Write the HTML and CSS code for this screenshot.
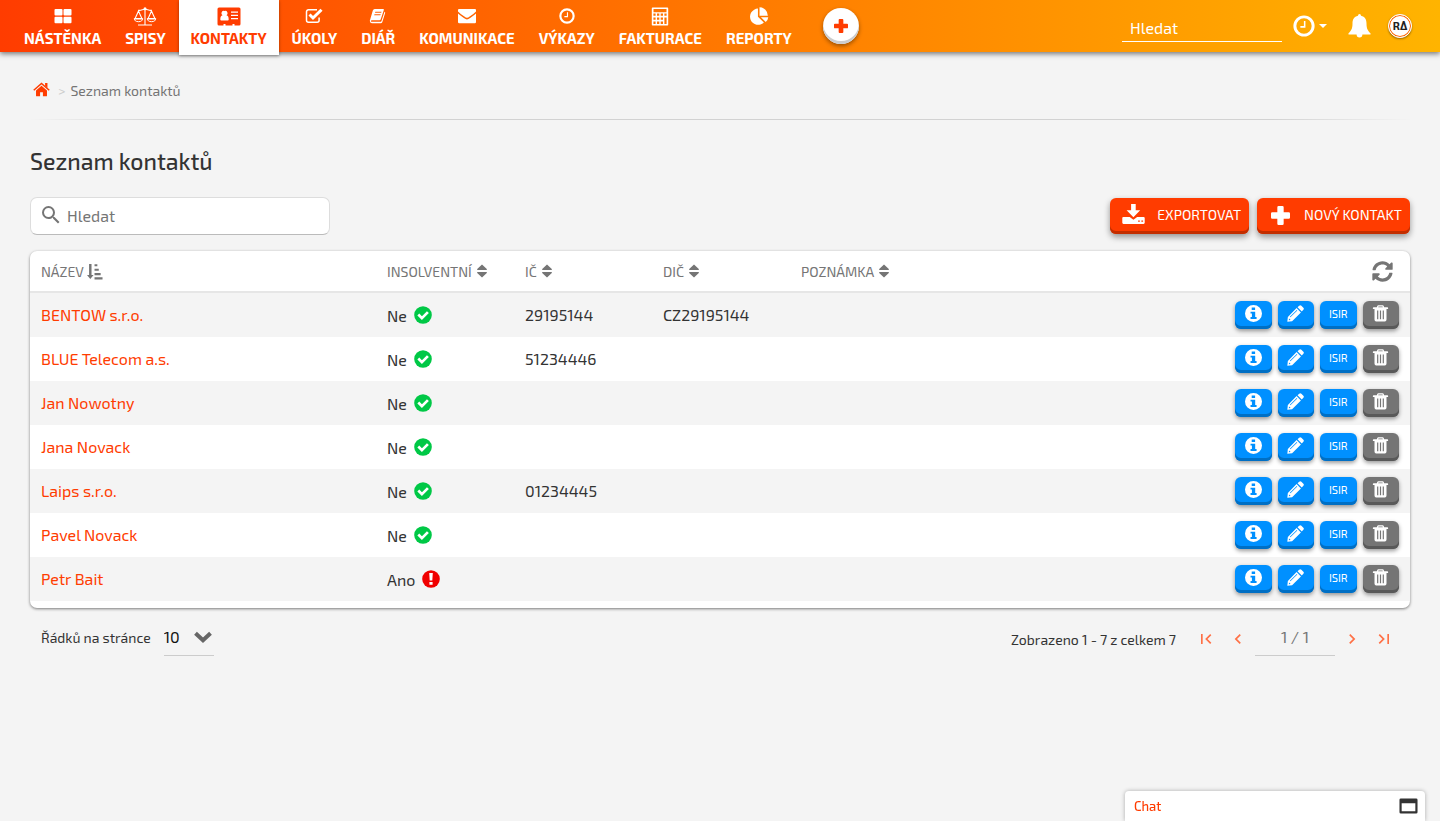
FILE: index.html
```html
<!DOCTYPE html>
<html lang="cs">
<head>
<meta charset="utf-8">
<meta name="viewport" content="width=device-width, initial-scale=1">
<title>Seznam kontaktů</title>
<link rel="stylesheet" href="styles.css">
</head>
<body>
<svg class="sprite" aria-hidden="true">
  <symbol id="i-grid" viewBox="0 0 18 16"><rect x="0.500" y="1" width="8" height="6.500" rx="1"/><rect x="9.500" y="1" width="8" height="6.500" rx="1"/><rect x="0.500" y="8.800" width="8" height="6.500" rx="1"/><rect x="9.500" y="8.800" width="8" height="6.500" rx="1"/></symbol>
  <symbol id="i-scale" viewBox="0 0 22 19"><g fill="none" stroke="currentColor" stroke-width="1.1"><path d="M11 2v15.400M4 18h14M4 3.200c3 .8 4.500-1 7-1s4 1.800 7 1M4.500 4L.9 12h7.200zM17.500 4l-3.600 8h7.200z"/></g><path d="M.3 11.500h8.400c0 2-1.500 3.200-4.200 3.200S.3 13.500.3 11.500zm13 0h8.400c0 2-1.500 3.200-4.200 3.200s-4.200-1.200-4.200-3.200z" fill="none" stroke="currentColor"/><circle cx="11" cy="1.800" r="1.500"/></symbol>
  <symbol id="i-card" viewBox="0 0 24 18"><path fill-rule="evenodd" d="M2 0h20a1.500 1.500 0 0 1 1.500 1.500v15A1.500 1.500 0 0 1 22 18h-4.500v-1.500h-2V18h-7v-1.500h-2V18H2a1.500 1.500 0 0 1-1.500-1.500v-15A1.500 1.500 0 0 1 2 0zm5.500 3.500a2.400 2.400 0 0 0-2 4.300C4 8.300 3.300 9.500 3.300 12q0 1 1 1h6.400q1 0 1-1c0-2.500-.7-3.700-2.200-4.200a2.400 2.400 0 0 0-2-4.300zM14 4v1.300h7V4zm0 3.200v1.300h7V7.200zm0 3.200v1.300h7v-1.300z"/></symbol>
  <symbol id="i-check" viewBox="0 0 18 16"><path fill="none" stroke="currentColor" stroke-width="1.500" d="M12 1.800H3.500a2 2 0 0 0-2 2v8.400a2 2 0 0 0 2 2h8.600a2 2 0 0 0 2-2V9.500"/><path fill="none" stroke="currentColor" stroke-width="3" d="M4.500 6.500l3.500 3.500 8.500-8.300"/></symbol>
  <symbol id="i-book" viewBox="0 0 18 17"><path fill-rule="evenodd" d="M5.500 1h9q1 0 .7 1l-3.300 10q-.3 1-1.300 1H2.400q-.8 0-1 .8.200.9 1.200.9h8.800q1 0 1.300-1l3.200-9.600q1 .2.700 1.200l-3 9.500q-.4 1.500-1.800 1.500H2.500Q.2 15.800.3 13.500L3.500 2.700Q4 1 5.500 1zm.7 3l-.4 1.100h6.600l.4-1.100zm-.9 2.700l-.4 1.100h6.600l.4-1.100z"/></symbol>
  <symbol id="i-mail" viewBox="0 0 20 16"><path d="M2 1h16q1 0 1 1v1.500q-1.500 1.800-6 4.700-2 1.500-3 1.500t-3-1.500Q2.500 5.300 1 3.500V2q0-1 1-1zM1 5.500q1.500 1.500 5.500 4.300Q8.800 11.400 10 11.400t3.500-1.600Q17.500 7 19 5.500V14q0 1.200-1.200 1.200H2.200Q1 15.200 1 14z"/></symbol>
  <symbol id="i-clock" viewBox="0 0 20 20"><circle cx="10" cy="10" r="8.300" fill="none" stroke="currentColor" stroke-width="2.700"/><path d="M10.600 5.400v5.400H6.700" fill="none" stroke="currentColor" stroke-width="1.400"/></symbol>
  <symbol id="i-calc" viewBox="0 0 17 19"><path fill-rule="evenodd" d="M1 .5h15q.7 0 .7.700v16.600q0 .7-.7.700H1q-.7 0-.7-.7V1.200Q.300.500 1 .5zM2 1.900v3.300h13V1.900zM1.900 6.600v2.200h2.200V6.600zm3.600 0v2.200h2.300V6.600zm3.700 0v2.200h2.300V6.600zm3.700 0v2.200h2.200V6.600zM1.900 10.500v2.200h2.200v-2.200zm3.600 0v2.200h2.300v-2.200zm3.700 0v2.200h2.300v-2.200zm3.700 0v6.400h2.200v-6.400zM1.900 14.500v2.400h2.200v-2.400zm3.600 0v2.400h2.300v-2.400zm3.700 0v2.400h2.300v-2.400z"/></symbol>
  <symbol id="i-pie" viewBox="0 0 18 18"><path d="M8 1.500V9.200l5.600 5.500A7.700 7.700 0 1 1 8 1.500zM9.500.3a8 8 0 0 1 7.900 7.900H9.500zM10.800 9.700h7a7.400 7.400 0 0 1-2.400 4.600z"/></symbol>
  <symbol id="i-plus" viewBox="0 0 18 18"><path d="M7.200 0h3.600q1.200 0 1.200 1.200V6h4.800Q18 6 18 7.200v3.600q0 1.200-1.200 1.200H12v4.800q0 1.200-1.200 1.200H7.200Q6 18 6 16.800V12H1.200Q0 12 0 10.800V7.200Q0 6 1.200 6H6V1.200Q6 0 7.200 0z"/></symbol>
  <symbol id="i-bell" viewBox="0 0 22 24"><path d="M11 0q1.500 0 1.500 1.800C16.500 2.600 18 5.500 18 9.500c0 5.500 1.500 7.500 4 9.700v1.300h-8.100a2.900 2.900 0 0 1-5.800 0H0v-1.300c2.500-2.200 4-4.200 4-9.700 0-4 1.500-6.900 5.500-7.700Q9.500 0 11 0z"/></symbol>
  <symbol id="i-home" viewBox="0 0 18 15"><path d="M9 3.500l5.800 5V14q0 .6-.6.600h-3.700v-4.300h-3v4.300H3.800q-.6 0-.6-.6V8.500z"/><path d="M.8 8.300L9 1.200l8.200 7.100" fill="none" stroke="currentColor" stroke-width="1.600"/><path d="M12.800.600h2.500v5.200l-2.500-2.200z"/></symbol>
  <symbol id="i-search" viewBox="3 3 18 18"><path d="M15.500 14h-.79l-.28-.27A6.471 6.471 0 0 0 16 9.500 6.500 6.500 0 1 0 9.500 16c1.610 0 3.090-.59 4.230-1.570l.27.280v.79l5 4.990L20.490 19l-4.990-5zm-6 0C7.010 14 5 11.990 5 9.500S7.010 5 9.500 5 14 7.010 14 9.500 11.990 14 9.500 14z"/></symbol>
  <symbol id="i-download" viewBox="0 0 24 22"><path d="M9.500.5h4.800V7H19l-7.100 7.300L4.800 7h4.700z"/><path fill-rule="evenodd" d="M1.500 14H8l3.900 3 3.900-3h6.700q1.200 0 1.200 1.200v5q0 1.200-1.200 1.200h-21Q.3 21.400.3 20.200v-5Q.3 14 1.500 14zm15.300 3.800V19h1.800v-1.200zm3.400 0V19H22v-1.200z"/></symbol>
  <symbol id="i-asc" viewBox="0 0 17 17"><path d="M2.200.5h2.600v11.800H7l-3.500 4.200L0 12.300h2.200zM8 .8h3v2.200H8zm0 4.800h4.500v2.200H8zm0 4.600h6.500v2.300H8zm0 4.500h8.500v2.200H8z"/></symbol>
  <symbol id="i-sort" viewBox="0 0 10 14"><path d="M5 .5l4.800 4.600v1H.2v-1zM.2 8h9.600v1L5 13.500.2 9z"/></symbol>
  <symbol id="i-sync" viewBox="0 0 512 512"><path d="M370.720 133.280C339.458 104.008 298.888 87.962 255.848 88c-77.458.068-144.328 53.178-162.791 126.850-1.344 5.363-6.122 9.150-11.651 9.150H24.103c-7.498 0-13.194-6.807-11.807-14.176C33.933 94.924 134.813 8 256 8c66.448 0 126.791 26.136 171.315 68.685L463.030 40.970C478.149 25.851 504 36.559 504 57.941V192c0 13.255-10.745 24-24 24H345.941c-21.382 0-32.090-25.851-16.971-40.971zM32 296h134.059c21.382 0 32.090 25.851 16.971 40.971l-41.750 41.750c31.262 29.273 71.835 45.319 114.876 45.280 77.418-.070 144.315-53.144 162.787-126.849 1.344-5.363 6.122-9.150 11.651-9.150h57.304c7.498 0 13.194 6.807 11.807 14.176C478.067 417.076 377.187 504 256 504c-66.448 0-126.791-26.136-171.315-68.685L48.970 471.030C33.851 486.149 8 475.441 8 454.059V320c0-13.255 10.745-24 24-24z"/></symbol>
  <symbol id="i-ok" viewBox="0 0 18 18"><circle cx="9" cy="9" r="8.800"/><path d="M4.300 8.500l3.600 3.600 6-6" fill="none" stroke="#fff" stroke-width="2.700"/></symbol>
  <symbol id="i-alert" viewBox="0 0 18 18"><circle cx="9" cy="9" r="8.800"/><path d="M7.200 3h3.600l-.5 7.500H7.700zM7.400 12h3.200v2.800H7.400z" fill="#fff"/></symbol>
  <symbol id="i-info" viewBox="0 0 16 16"><path fill-rule="evenodd" d="M8 0a8 8 0 1 1 0 16A8 8 0 0 1 8 0zM6.300 2.400v2.300h3.200V2.400zM5.200 6.300v1.700h1.300v3.400H5.200v1.800h5.700v-1.800H9.600V6.300z"/></symbol>
  <symbol id="i-edit" viewBox="0 0 16 16"><path fill-rule="evenodd" d="M11.500.7q1-1 2 0l1.900 1.900q.9 1 0 1.900l-1.500 1.500-4-4zM9 2.900l4.100 4.100-8.300 8.200-4.500.5.500-4.500zM9.200 4.600l-6.500 6.500.5.500 6.500-6.500zM2 12.600l-.3 1.700 1.700-.3z"/></symbol>
  <symbol id="i-trash" viewBox="0 0 16 17"><path fill-rule="evenodd" d="M5.800.3h4.400q.8 0 1 .7l.5 1.300h3.200q.7 0 .7.800v.8H14v10.600q0 2-1.700 2H3.700q-1.700 0-1.700-2V3.900H.4v-.8q0-.8.700-.8h3.200L4.800 1q.2-.7 1-.7zm.2 1.200l-.3.800h4.600l-.3-.8zM4.600 5.500v8.700h1.200V5.500zm2.800 0v8.700h1.200V5.500zm2.800 0v8.700h1.200V5.500z"/></symbol>
  <symbol id="i-down" viewBox="0 0 18 12"><path d="M1.500 2.200L9 9.200l7.500-7" fill="none" stroke="currentColor" stroke-width="4"/></symbol>
  <symbol id="i-first" viewBox="0 0 24 24"><path d="M18.410 16.590L13.820 12l4.590-4.590L17 6l-6 6 6 6zM6 6h2v12H6z"/></symbol>
  <symbol id="i-prev" viewBox="0 0 24 24"><path d="M15.410 7.410L14 6l-6 6 6 6 1.410-1.410L10.830 12z"/></symbol>
  <symbol id="i-next" viewBox="0 0 24 24"><path d="M10 6L8.590 7.410 13.170 12l-4.580 4.590L10 18l6-6z"/></symbol>
  <symbol id="i-last" viewBox="0 0 24 24"><path d="M5.590 7.410L10.180 12l-4.590 4.590L7 18l6-6-6-6zM16 6h2v12h-2z"/></symbol>
  <symbol id="i-window" viewBox="0 0 20 16"><path fill-rule="evenodd" d="M2 0h16q1.500 0 1.500 1.500v13Q19.500 16 18 16H2Q.5 16 .5 14.500v-13Q.5 0 2 0zm.8 5v8.500h14.400V5z"/></symbol>
</svg>

<header class="topbar">
  <nav class="menu" aria-label="Hlavní menu">
    <a class="tab" href="#"><svg class="tab-icon"><use href="#i-grid"/></svg>NÁSTĚNKA</a>
    <a class="tab" href="#"><svg class="tab-icon tab-icon-lg"><use href="#i-scale"/></svg>SPISY</a>
    <a class="tab tab-active" href="#" aria-current="page"><svg class="tab-icon tab-icon-lg"><use href="#i-card"/></svg>KONTAKTY</a>
    <a class="tab" href="#"><svg class="tab-icon"><use href="#i-check"/></svg>ÚKOLY</a>
    <a class="tab" href="#"><svg class="tab-icon"><use href="#i-book"/></svg>DIÁŘ</a>
    <a class="tab" href="#"><svg class="tab-icon"><use href="#i-mail"/></svg>KOMUNIKACE</a>
    <a class="tab" href="#"><svg class="tab-icon"><use href="#i-clock"/></svg>VÝKAZY</a>
    <a class="tab" href="#"><svg class="tab-icon tab-icon-lg"><use href="#i-calc"/></svg>FAKTURACE</a>
    <a class="tab" href="#"><svg class="tab-icon tab-icon-lg"><use href="#i-pie"/></svg>REPORTY</a>
  </nav>
  <button class="add" type="button" aria-label="Přidat"><svg><use href="#i-plus"/></svg></button>
  <div class="tools">
    <input class="top-search" type="search" placeholder="Hledat" aria-label="Hledat v aplikaci">
    <button class="tool timer" type="button" aria-label="Měření času"><svg><use href="#i-clock"/></svg><span class="caret"></span></button>
    <button class="tool bell" type="button" aria-label="Oznámení"><svg><use href="#i-bell"/></svg></button>
    <button class="avatar" type="button" aria-label="Uživatel">RΔ</button>
  </div>
</header>

<main class="page">
  <nav class="crumbs" aria-label="Drobečková navigace">
    <a class="home" href="#" aria-label="Domů"><svg><use href="#i-home"/></svg></a>
    <span class="crumb-sep">&gt;</span>
    <span>Seznam kontaktů</span>
  </nav>
  <h1 class="title">Seznam kontaktů</h1>
  <div class="toolbar">
    <label class="search"><svg><use href="#i-search"/></svg><input type="search" placeholder="Hledat" aria-label="Hledat kontakt"></label>
    <div class="actions">
      <button class="btn" type="button"><svg class="btn-icon"><use href="#i-download"/></svg>EXPORTOVAT</button>
      <button class="btn" type="button"><svg class="btn-icon btn-plus"><use href="#i-plus"/></svg>NOVÝ KONTAKT</button>
    </div>
  </div>

  <section class="card">
    <table class="contacts">
      <colgroup><col class="c-name"><col class="c-mid"><col class="c-mid"><col class="c-mid"><col><col class="c-act"></colgroup>
      <thead>
        <tr>
          <th scope="col"><button class="sort sort-asc" type="button">NÁZEV<svg><use href="#i-asc"/></svg></button></th>
          <th scope="col"><button class="sort" type="button">INSOLVENTNÍ<svg><use href="#i-sort"/></svg></button></th>
          <th scope="col"><button class="sort" type="button">IČ<svg><use href="#i-sort"/></svg></button></th>
          <th scope="col"><button class="sort" type="button">DIČ<svg><use href="#i-sort"/></svg></button></th>
          <th scope="col"><button class="sort" type="button">POZNÁMKA<svg><use href="#i-sort"/></svg></button></th>
          <th scope="col"><button class="reload" type="button" aria-label="Obnovit"><svg><use href="#i-sync"/></svg></button></th>
        </tr>
      </thead>
      <tbody>
        <tr><td><a href="#">BENTOW s.r.o.</a></td><td><span class="state">Ne<svg class="ok"><use href="#i-ok"/></svg></span></td><td>29195144</td><td>CZ29195144</td><td></td><td><div class="row-actions"><button class="mini" type="button" aria-label="Detail"><svg><use href="#i-info"/></svg></button><button class="mini" type="button" aria-label="Upravit"><svg><use href="#i-edit"/></svg></button><button class="mini" type="button">ISIR</button><button class="mini mini-grey" type="button" aria-label="Smazat"><svg><use href="#i-trash"/></svg></button></div></td></tr>
        <tr><td><a href="#">BLUE Telecom a.s.</a></td><td><span class="state">Ne<svg class="ok"><use href="#i-ok"/></svg></span></td><td>51234446</td><td></td><td></td><td><div class="row-actions"><button class="mini" type="button" aria-label="Detail"><svg><use href="#i-info"/></svg></button><button class="mini" type="button" aria-label="Upravit"><svg><use href="#i-edit"/></svg></button><button class="mini" type="button">ISIR</button><button class="mini mini-grey" type="button" aria-label="Smazat"><svg><use href="#i-trash"/></svg></button></div></td></tr>
        <tr><td><a href="#">Jan Nowotny</a></td><td><span class="state">Ne<svg class="ok"><use href="#i-ok"/></svg></span></td><td></td><td></td><td></td><td><div class="row-actions"><button class="mini" type="button" aria-label="Detail"><svg><use href="#i-info"/></svg></button><button class="mini" type="button" aria-label="Upravit"><svg><use href="#i-edit"/></svg></button><button class="mini" type="button">ISIR</button><button class="mini mini-grey" type="button" aria-label="Smazat"><svg><use href="#i-trash"/></svg></button></div></td></tr>
        <tr><td><a href="#">Jana Novack</a></td><td><span class="state">Ne<svg class="ok"><use href="#i-ok"/></svg></span></td><td></td><td></td><td></td><td><div class="row-actions"><button class="mini" type="button" aria-label="Detail"><svg><use href="#i-info"/></svg></button><button class="mini" type="button" aria-label="Upravit"><svg><use href="#i-edit"/></svg></button><button class="mini" type="button">ISIR</button><button class="mini mini-grey" type="button" aria-label="Smazat"><svg><use href="#i-trash"/></svg></button></div></td></tr>
        <tr><td><a href="#">Laips s.r.o.</a></td><td><span class="state">Ne<svg class="ok"><use href="#i-ok"/></svg></span></td><td>01234445</td><td></td><td></td><td><div class="row-actions"><button class="mini" type="button" aria-label="Detail"><svg><use href="#i-info"/></svg></button><button class="mini" type="button" aria-label="Upravit"><svg><use href="#i-edit"/></svg></button><button class="mini" type="button">ISIR</button><button class="mini mini-grey" type="button" aria-label="Smazat"><svg><use href="#i-trash"/></svg></button></div></td></tr>
        <tr><td><a href="#">Pavel Novack</a></td><td><span class="state">Ne<svg class="ok"><use href="#i-ok"/></svg></span></td><td></td><td></td><td></td><td><div class="row-actions"><button class="mini" type="button" aria-label="Detail"><svg><use href="#i-info"/></svg></button><button class="mini" type="button" aria-label="Upravit"><svg><use href="#i-edit"/></svg></button><button class="mini" type="button">ISIR</button><button class="mini mini-grey" type="button" aria-label="Smazat"><svg><use href="#i-trash"/></svg></button></div></td></tr>
        <tr><td><a href="#">Petr Bait</a></td><td><span class="state">Ano<svg class="warn"><use href="#i-alert"/></svg></span></td><td></td><td></td><td></td><td><div class="row-actions"><button class="mini" type="button" aria-label="Detail"><svg><use href="#i-info"/></svg></button><button class="mini" type="button" aria-label="Upravit"><svg><use href="#i-edit"/></svg></button><button class="mini" type="button">ISIR</button><button class="mini mini-grey" type="button" aria-label="Smazat"><svg><use href="#i-trash"/></svg></button></div></td></tr>
      </tbody>
    </table>
  </section>

  <footer class="pager">
    <label class="page-size" for="page-size">Řádků na stránce
      <span class="select"><select id="page-size"><option>10</option><option>25</option><option>50</option></select><svg><use href="#i-down"/></svg></span>
    </label>
    <div class="pages">
      <span class="summary">Zobrazeno 1 - 7 z celkem 7</span>
      <button class="step" type="button" aria-label="První stránka"><svg><use href="#i-first"/></svg></button>
      <button class="step" type="button" aria-label="Předchozí stránka"><svg><use href="#i-prev"/></svg></button>
      <input class="page-no" type="text" value="1 / 1" aria-label="Stránka">
      <button class="step" type="button" aria-label="Další stránka"><svg><use href="#i-next"/></svg></button>
      <button class="step" type="button" aria-label="Poslední stránka"><svg><use href="#i-last"/></svg></button>
    </div>
  </footer>
</main>

<aside class="chat"><span>Chat</span><button type="button" aria-label="Otevřít chat"><svg><use href="#i-window"/></svg></button></aside>
</body>
</html>
```
FILE: styles.css
```css
:root {
  --brand: #ff3c00;
  --blue: #0090ff;
  --grey: #757575;
  --ink: #333;
}
* { box-sizing: border-box; }
body {
  margin: 0;
  min-height: 100vh;
  background: #f4f4f4;
  color: var(--ink);
  font: 16px/20px "Exo 2", Roboto, sans-serif;
}
button, input, select { font: inherit; color: inherit; }
button {
  display: flex;
  align-items: center;
  justify-content: center;
  padding: 0;
  border: 0;
  background: none;
  cursor: pointer;
}
a { color: var(--brand); text-decoration: none; }
svg { display: block; flex: none; fill: currentColor; }
.sprite { position: absolute; width: 0; height: 0; }

.topbar {
  display: flex;
  align-items: center;
  height: 52px;
  padding: 0 28px 0 12px;
  background: linear-gradient(90deg, #ff3c00, #ffb400);
  box-shadow: 0 2px 5px rgba(0, 0, 0, .5);
  color: #fff;
}
.menu { display: flex; align-self: flex-start; }
.tab {
  display: flex;
  flex-direction: column;
  align-items: center;
  height: 55px;
  padding: 7px 12px 0;
  color: #fff;
  font-size: 15px;
  font-weight: 700;
  line-height: 24px;
}
.tab-icon { width: 20px; height: 16px; margin: 1px 0 2px; }
.tab-icon-lg { width: 24px; height: 19px; margin: 0; }
.tab-active {
  margin: 0 1px;
  background: #fff;
  color: var(--brand);
  box-shadow: 0 1px 3px rgba(0, 0, 0, .4);
}
.add {
  width: 36px;
  height: 36px;
  margin-left: 19px;
  border-radius: 50%;
  background: #fff;
  color: var(--brand);
  box-shadow: inset 0 -3px #ccc, 0 2px 4px rgba(0, 0, 0, .4);
}
.add svg { width: 14px; height: 14px; }
.tools { display: flex; align-items: center; margin-left: auto; }
.top-search {
  width: 160px;
  height: 28px;
  margin: 3px 11px 0 0;
  padding: 0 8px;
  border: 0;
  border-bottom: 1px solid #fff;
  background: none;
  outline: 0;
}
.top-search::placeholder { color: #fff; opacity: 1; }
.tool { gap: 4px; }
.timer svg { width: 22px; height: 22px; }
.caret { border: 4px solid transparent; border-top-color: #fff; border-bottom: 0; }
.bell { margin: 0 17px 0 21px; }
.bell svg { width: 23px; height: 24px; }
.avatar {
  width: 24px;
  height: 24px;
  border: 1px solid #fff;
  border-radius: 50%;
  background: #fff;
  box-shadow: inset 0 0 0 1px #f60, 0 1px 2px rgba(0, 0, 0, .4);
  color: #222;
  font-size: 11px;
  font-weight: 700;
}

.page { padding: 0 30px; }
.crumbs {
  display: flex;
  align-items: center;
  height: 68px;
  padding: 10px 3px 0;
  gap: 5px;
  border-bottom: 1px solid;
  border-image: linear-gradient(90deg, transparent, #d2d2d2 10%, #d2d2d2 90%, transparent) 1;
  color: var(--grey);
  font-size: 14px;
}
.home { padding-bottom: 2px; }
.home svg { width: 17px; height: 15px; }
.crumb-sep { margin-left: 3px; color: #ccc; }
.title { margin: 26px 0 20px; font-size: 23px; font-weight: 500; line-height: 31px; }
.toolbar { display: flex; align-items: center; justify-content: space-between; }
.search {
  display: flex;
  align-items: center;
  width: 300px;
  height: 38px;
  padding: 0 11px;
  gap: 7px;
  border: 1px solid #ddd;
  border-bottom-color: #bbb;
  border-radius: 7px;
  background: #fff;
  color: var(--grey);
}
.search svg { width: 18px; height: 18px; margin-bottom: 2px; }
.search input { flex: 1; min-width: 0; padding: 0; border: 0; outline: 0; background: none; }
.search input::placeholder { color: var(--grey); opacity: 1; }
.actions { display: flex; gap: 8px; }
.btn {
  height: 36px;
  padding: 0 8px 2px 12px;
  gap: 12px;
  border-radius: 6px;
  background: var(--brand);
  box-shadow: inset 0 -3px #c32e00, 0 3px 6px rgba(0, 0, 0, .4);
  color: #fff;
  font-size: 14px;
}
.btn-icon { width: 23px; height: 22px; margin-bottom: 2px; }
.btn-plus { height: 19px; margin-bottom: 0; }

.card {
  margin-top: 16px;
  padding-bottom: 7px;
  border-radius: 7px;
  background: #fff;
  box-shadow: 0 1px 3px rgba(0, 0, 0, .5);
}
.contacts { width: 100%; border-collapse: separate; border-spacing: 0; table-layout: fixed; }
.c-name { width: 346px; }
.c-mid { width: 138px; }
.c-act { width: 200px; }
.contacts th { height: 42px; padding: 0 11px; border-bottom: 2px solid #e6e6e6; font-weight: 400; }
.contacts td { height: 44px; padding: 0 11px; }
.contacts tbody tr:nth-child(odd) { background: #f4f4f4; }
.sort { padding-top: 2px; gap: 5px; color: var(--grey); font-size: 14px; }
.sort svg { width: 10px; height: 14px; margin-bottom: 2px; }
.sort-asc { gap: 3px; }
.sort-asc svg { width: 16px; height: 17px; }
.reload { margin: 0 6px 0 auto; color: var(--grey); }
.reload svg { width: 21px; height: 21px; }
.state { display: flex; align-items: center; padding-top: 2px; gap: 7px; }
.state svg { width: 18px; height: 18px; margin-bottom: 2px; }
.ok { color: #00c846; }
.warn { color: #f00000; }
.row-actions { display: grid; grid-template-columns: repeat(4, 1fr); width: 164px; margin-left: auto; gap: 6px; }
.mini {
  height: 28px;
  padding-bottom: 2px;
  border-radius: 6px;
  background: var(--blue);
  box-shadow: inset 0 -3px #006fc4, 0 2px 4px rgba(0, 0, 0, .4);
  color: #fff;
  font-size: 11px;
}
.mini svg { width: 17px; height: 17px; margin-bottom: 2px; }
.mini-grey { background: var(--grey); box-shadow: inset 0 -3px #595959, 0 2px 4px rgba(0, 0, 0, .4); }

.pager {
  display: flex;
  justify-content: space-between;
  padding: 11px 11px 0;
  font-size: 14px;
}
.page-size { display: flex; align-items: center; gap: 13px; }
.select { display: flex; align-items: center; width: 50px; height: 37px; border-bottom: 1px solid #ccc; }
.select select {
  appearance: none;
  flex: 1;
  width: 100%;
  margin-right: -18px;
  padding: 0 18px 0 0;
  border: 0;
  background: none;
  color: #111;
  font-size: 16px;
}
.select svg { width: 18px; height: 12px; margin-right: 2px; color: #666; pointer-events: none; }
.pages { display: flex; align-items: center; padding-right: 3px; gap: 8px; }
.summary { margin-right: 10px; padding-top: 4px; }
.step { width: 24px; height: 24px; padding-top: 2px; color: #ff7045; }
.step svg { width: 20px; height: 20px; }
.page-no {
  width: 80px;
  height: 37px;
  margin: 0 -3px;
  padding: 0 0 2px;
  border: 0;
  border-bottom: 1px solid #ccc;
  background: none;
  color: var(--grey);
  font-size: 16px;
  text-align: center;
}

.chat {
  position: fixed;
  right: 15px;
  bottom: 0;
  display: flex;
  align-items: center;
  justify-content: space-between;
  width: 300px;
  height: 30px;
  padding: 0 7px 0 9px;
  border-radius: 4px 4px 0 0;
  background: #fff;
  box-shadow: 0 0 4px rgba(0, 0, 0, .3);
  color: var(--brand);
  font-size: 13px;
  font-weight: 500;
}
.chat button { color: #333; }
.chat svg { width: 19px; height: 16px; }
```
